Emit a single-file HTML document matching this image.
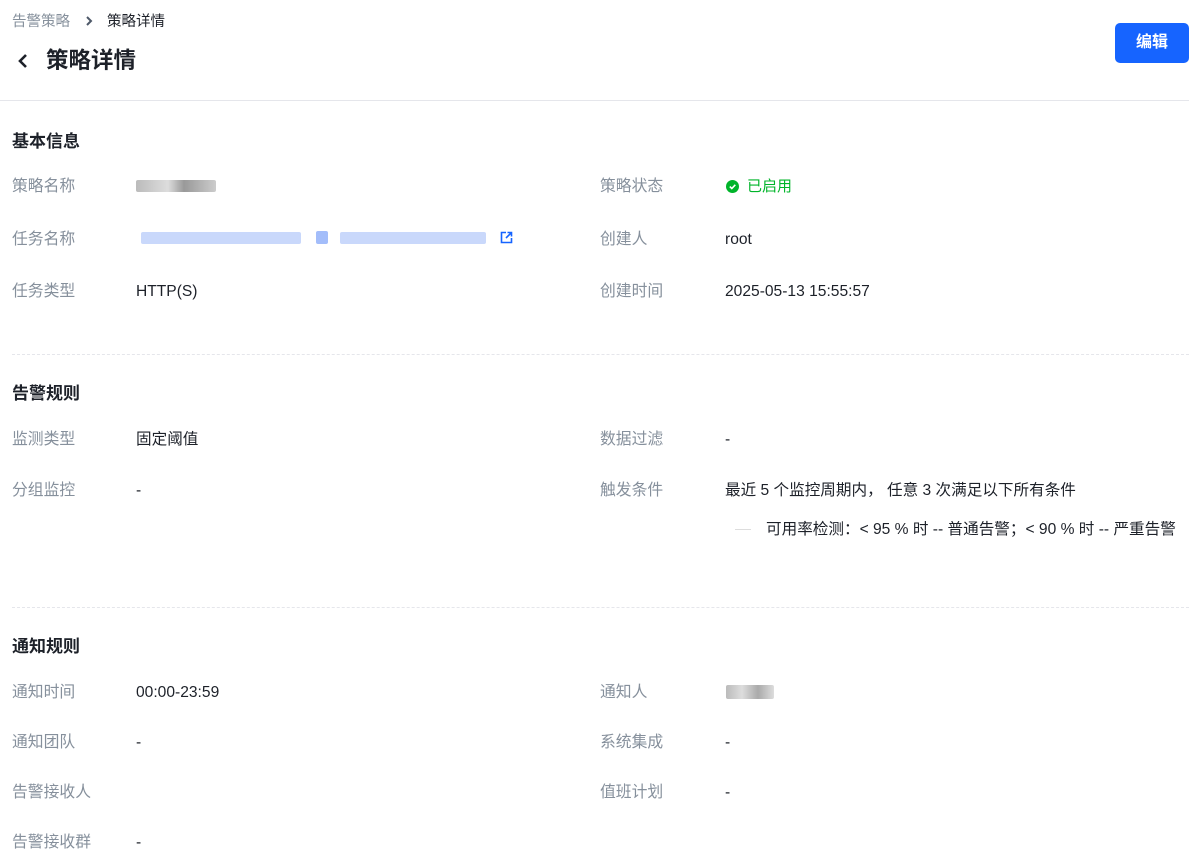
<!DOCTYPE html>
<html><head><meta charset="utf-8"><style>
*{margin:0;padding:0;box-sizing:border-box}
body{width:1189px;height:860px;background:#fff;font-family:"Liberation Sans","Noto Sans CJK SC",sans-serif;position:relative;overflow:hidden;color:#1d2129}
.a{position:absolute;white-space:nowrap;line-height:20px;transform:translateY(-9px)}
.l{color:#86909c;font-size:15.8px}
.v{font-size:15.6px;color:#1d2129}
.t{font-size:17px;font-weight:bold;color:#1d2129}
.hr{position:absolute;left:12px;right:0;height:0;border-top:1px dashed #e5e6eb}
.blur{position:absolute;border-radius:2px}
</style></head><body>
<div class="a" style="left:12px;top:21px;font-size:14.5px;color:#86909c">告警策略</div>
<svg style="position:absolute;left:84px;top:15px" width="10" height="12" viewBox="0 0 10 12"><path d="M3 2 L7 6 L3 10" stroke="#4e5969" stroke-width="2" fill="none"/></svg>
<div class="a" style="left:107px;top:21px;font-size:14.5px;color:#1d2129">策略详情</div>
<svg style="position:absolute;left:16px;top:53px" width="14" height="16" viewBox="0 0 14 16"><path d="M10 2 L4 8 L10 14" stroke="#1d2129" stroke-width="2.6" fill="none"/></svg>
<div class="a" style="left:46px;top:61px;font-size:22.5px;font-weight:bold;line-height:28px;transform:translateY(-14px)">策略详情</div>
<div style="position:absolute;left:1115px;top:23px;width:74px;height:40px;background:#1664ff;border-radius:5px;color:#fff;font-size:16px;font-weight:bold;text-align:center;line-height:40px">编辑</div>
<div style="position:absolute;left:0;right:0;top:100px;border-top:1px solid #e5e6eb"></div>

<div class="a t" style="left:12px;top:141px">基本信息</div>
<div class="a l" style="left:12px;top:186px">策略名称</div>
<div class="blur" style="left:136px;top:180px;width:80px;height:12px;background:linear-gradient(90deg,#bbb,#ddd 40%,#999 60%,#ccc)"></div>
<div class="a l" style="left:600px;top:186px">策略状态</div>
<svg style="position:absolute;left:726px;top:180px" width="13" height="13" viewBox="0 0 13 13"><circle cx="6.5" cy="6.5" r="6.5" fill="#00b42a"/><path d="M3.8 6.6 L5.8 8.5 L9.3 4.8" stroke="#fff" stroke-width="1.6" fill="none"/></svg>
<div class="a" style="left:747px;top:186px;font-size:15px;color:#00b42a">已启用</div>
<div class="a l" style="left:12px;top:239px">任务名称</div>
<div class="blur" style="left:141px;top:232px;width:160px;height:12px;background:#c9d8fb"></div>
<div class="blur" style="left:316px;top:231px;width:12px;height:13px;background:#a3bdfa"></div>
<div class="blur" style="left:340px;top:232px;width:146px;height:12px;background:#c9d8fb"></div>
<svg style="position:absolute;left:500px;top:231px" width="13" height="13" viewBox="0 0 13 13"><path d="M6 1.5H1.5V11.5H11.5V7 M7.5 1.5H11.5V5.5 M11.5 1.5L6 7" stroke="#1664ff" stroke-width="1.6" fill="none"/></svg>
<div class="a l" style="left:600px;top:239px">创建人</div>
<div class="a v" style="left:725px;top:239px">root</div>
<div class="a l" style="left:12px;top:291px">任务类型</div>
<div class="a v" style="left:136px;top:291px">HTTP(S)</div>
<div class="a l" style="left:600px;top:291px">创建时间</div>
<div class="a v" style="left:725px;top:291px">2025-05-13 15:55:57</div>
<div class="hr" style="top:354px"></div>

<div class="a t" style="left:12px;top:393px">告警规则</div>
<div class="a l" style="left:12px;top:439px">监测类型</div>
<div class="a v" style="left:136px;top:439px">固定阈值</div>
<div class="a l" style="left:600px;top:439px">数据过滤</div>
<div class="a v" style="left:725px;top:439px">-</div>
<div class="a l" style="left:12px;top:490px">分组监控</div>
<div class="a v" style="left:136px;top:490px">-</div>
<div class="a l" style="left:600px;top:490px">触发条件</div>
<div class="a v" style="left:725px;top:490px">最近 5 个监控周期内， 任意 3 次满足以下所有条件</div>
<div style="position:absolute;left:735px;top:529px;width:16px;border-top:1px solid #ddd"></div>
<div class="a v" style="left:766px;top:529px">可用率检测：&lt; 95 % 时 -- 普通告警；&lt; 90 % 时 -- 严重告警</div>
<div class="hr" style="top:607px"></div>

<div class="a t" style="left:12px;top:646px">通知规则</div>
<div class="a l" style="left:12px;top:692px">通知时间</div>
<div class="a v" style="left:136px;top:692px">00:00-23:59</div>
<div class="a l" style="left:600px;top:692px">通知人</div>
<div class="blur" style="left:726px;top:685px;width:48px;height:14px;background:linear-gradient(90deg,#bbb,#ddd,#aaa,#ddd)"></div>
<div class="a l" style="left:12px;top:742px">通知团队</div>
<div class="a v" style="left:136px;top:742px">-</div>
<div class="a l" style="left:600px;top:742px">系统集成</div>
<div class="a v" style="left:725px;top:742px">-</div>
<div class="a l" style="left:12px;top:792px">告警接收人</div>
<div class="a l" style="left:600px;top:792px">值班计划</div>
<div class="a v" style="left:725px;top:792px">-</div>
<div class="a l" style="left:12px;top:842px">告警接收群</div>
<div class="a v" style="left:136px;top:842px">-</div>
</body></html>
